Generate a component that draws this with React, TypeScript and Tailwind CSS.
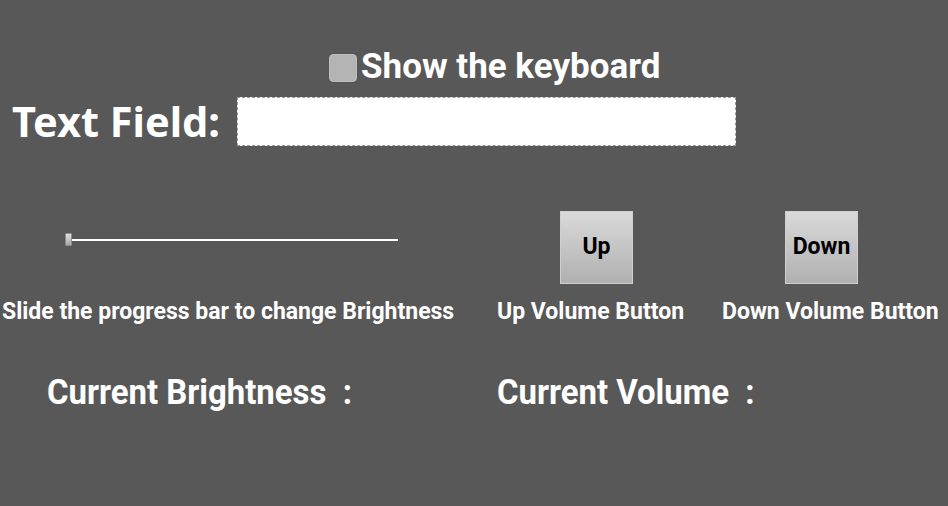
import React from "react";

export default function App() {
  return (
    <div className="w-[948px] h-[506px] bg-[#585858] text-white overflow-hidden font-['Roboto',sans-serif]">
      {/* Row 1: checkbox */}
      <div className="flex items-center pt-[50px] pl-[329px] h-[86px]">
        <div className="w-[28px] h-[28px] rounded-[4px] bg-[#b4b4b4] border border-[#bdbdbd] shadow-[0_0_1px_#444]" />
        <span className="ml-[4px] text-[35px] font-bold leading-none -mt-[4px]">Show the keyboard</span>
      </div>
      {/* Row 2: text field */}
      <div className="flex items-center mt-[11px] h-[49px]">
        <span className="pl-[12px] w-[237px] text-[41.5px] font-bold leading-none font-['Noto_Sans',sans-serif]">Text Field:</span>
        <div className="w-[499px] h-[49px] bg-white border border-dashed border-[#9a9a9a]" />
      </div>
      {/* Row 3: slider + buttons */}
      <div className="flex mt-[65px] h-[73px]">
        <div className="w-[497px] flex items-center pl-[65px] pt-[22px] self-start">
          <div className="w-[7px] h-[13px] rounded-[1px] bg-gradient-to-b from-[#e0e0e0] to-[#a8a8a8] border border-[#8c8c8c]" />
          <div className="w-[326px] h-[2px] bg-white" />
        </div>
        <div className="w-[225px] pl-[63px]">
          <button className="w-[73px] h-[73px] bg-gradient-to-b from-[#dadada] to-[#b0b0b0] border border-[#cfcfcf] text-black font-bold text-[23px] flex items-center justify-center">Up</button>
        </div>
        <div className="pl-[63px]">
          <button className="w-[73px] h-[73px] bg-gradient-to-b from-[#dadada] to-[#b0b0b0] border border-[#cfcfcf] text-black font-bold text-[23px] flex items-center justify-center">Down</button>
        </div>
      </div>
      {/* Row 4: labels */}
      <div className="flex mt-[16px] text-[23px] font-bold leading-none">
        <span className="w-[497px] pl-[2px]">Slide the progress bar to change Brightness</span>
        <span className="w-[225px]">Up Volume Button</span>
        <span>Down Volume Button</span>
      </div>
      {/* Row 5: current values */}
      <div className="flex mt-[52px] text-[35px] font-bold leading-none">
        <span className="w-[497px] pl-[47px]">
          <span className="inline-block origin-left scale-x-[0.94] whitespace-nowrap">Current Brightness{"\u00a0\u00a0"}:</span>
        </span>
        <span>
          <span className="inline-block origin-left scale-x-[0.94] whitespace-nowrap">Current Volume{"\u00a0\u00a0"}:</span>
        </span>
      </div>
    </div>
  );
}
